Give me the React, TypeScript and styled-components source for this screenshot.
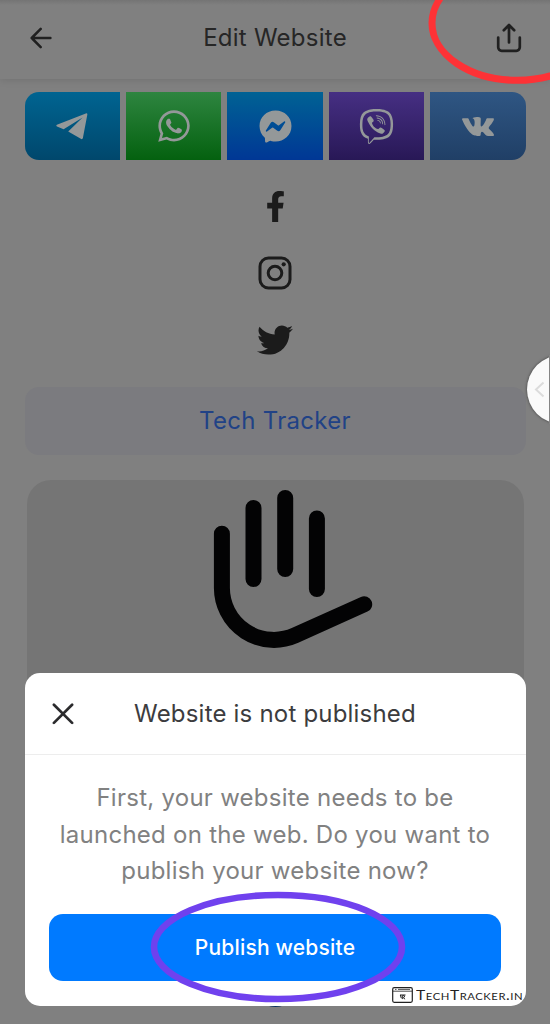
import React from "react";
import styled, { createGlobalStyle } from "styled-components";
import {
  FaWhatsapp,
  FaFacebookMessenger,
  FaViber,
  FaFacebookF,
  FaTwitter,
} from "react-icons/fa";

const GlobalStyle = createGlobalStyle`
  * { box-sizing: border-box; }
  body {
    margin: 0;
    background: #808080;
    font-family: Inter, "Liberation Sans", sans-serif;
    overflow: hidden;
  }
  svg { display: block; }
`;

const Screen = styled.main`
  position: relative;
  width: 550px;
  height: 1024px;
  overflow: hidden;
  background: #808080;
`;

const Header = styled.header`
  display: grid;
  grid-template-columns: 82px 1fr 82px;
  align-items: center;
  justify-items: center;
  height: 79px;
  padding-bottom: 3px;
  background: linear-gradient(#747474 0, #808080 5px);
  box-shadow: 0 1px 8px rgba(0, 0, 0, 0.12);
`;

const Title = styled.h1`
  margin: 0 0 1px;
  font-size: 24px;
  font-weight: 400;
  letter-spacing: 0.25px;
  color: #262626;
`;

const Page = styled.div`
  display: flex;
  flex-direction: column;
  padding: 13px 24.5px 0;
`;

const Messengers = styled.nav`
  display: flex;
  gap: 6px;
  height: 68px;
  border-radius: 14px;
  overflow: hidden;
`;

const Messenger = styled.a<{ $from: string; $to: string }>`
  flex: 1;
  display: flex;
  align-items: center;
  justify-content: center;
  color: #949899;
  background: linear-gradient(${(p) => p.$from}, ${(p) => p.$to});
`;

const Socials = styled.div`
  display: flex;
  flex-direction: column;
  align-items: center;
  padding-top: 12.5px;
  margin-bottom: 13px;
  color: #1b1b1b;
`;

const Social = styled.a`
  display: flex;
  align-items: center;
  justify-content: center;
  height: 67px;
`;

const LinkButton = styled.a`
  display: flex;
  align-items: center;
  justify-content: center;
  height: 68px;
  padding-bottom: 1px;
  border-radius: 14px;
  background: #7b7b7f;
  color: #214286;
  font-size: 24px;
  letter-spacing: 0.3px;
`;

const Card = styled.section`
  height: 500px;
  margin: 25px 2px 0;
  border-radius: 24px;
  background: #757575;
`;

const Sheet = styled.section`
  position: absolute;
  left: 24.5px;
  right: 24.5px;
  bottom: 18.5px;
  height: 332.5px;
  border-radius: 15px;
  background: #fff;
`;

const SheetHeader = styled.div`
  display: grid;
  grid-template-columns: 76px 1fr 76px;
  align-items: center;
  justify-items: center;
  height: 82px;
  border-bottom: 1px solid #ededed;
`;

const SheetTitle = styled.h2`
  margin: 0;
  font-size: 24px;
  font-weight: 400;
  letter-spacing: 0.2px;
  white-space: nowrap;
  color: #3c3c3e;
`;

const Message = styled.p`
  margin: 25px 0 24px;
  text-align: center;
  font-size: 24px;
  line-height: 36.6px;
  letter-spacing: 0.26px;
  color: #818181;
`;

const Publish = styled.button`
  display: block;
  width: 452px;
  height: 67px;
  margin: 0 auto;
  padding: 0;
  border: 0;
  border-radius: 14px;
  background: #007aff;
  color: #fff;
  font: 500 21px Inter, "Liberation Sans", sans-serif;
  letter-spacing: 0.2px;
`;

const BottomBadge = styled.div`
  position: absolute;
  left: 252px;
  top: 960px;
  width: 47px;
  height: 47px;
  border-radius: 50%;
  background: #08305f;
`;

const Handle = styled.div`
  position: absolute;
  left: 527px;
  top: 355px;
  width: 69px;
  height: 69px;
  padding: 26px 0 0 6px;
  border-radius: 50%;
  background: #fafafa;
  box-shadow: 0 0 3px rgba(0, 0, 0, 0.55);
`;

const ScreenEdge = styled.div`
  position: absolute;
  right: 0;
  top: 355px;
  width: 1px;
  height: 69px;
  background: #858585;
`;

const Marks = styled.svg`
  position: absolute;
  inset: 0;
  pointer-events: none;
`;

const Watermark = styled.div`
  position: absolute;
  left: 392px;
  top: 986px;
  display: flex;
  align-items: center;
  gap: 3px;
  color: #222;
`;

const WatermarkText = styled.span`
  font-family: Lato, "Open Sans", sans-serif;
  font-size: 12.5px;
  line-height: 17px;
  font-variant: small-caps;
  letter-spacing: 0.45px;
  white-space: nowrap;
  transform: scaleX(1.25);
  transform-origin: left;
  padding-top: 1px;
`;

const Telegram = () => (
  <svg width="32" height="27" viewBox="0 0 32 27" fill="currentColor">
    <path d="M.9 11.8L29.8.4Q31.6-.1 31.3 1.7L26.9 25Q26.4 26.8 24.8 25.8L12.2 18.6 26.6 4.4 7.6 16.2 1 13.6Q-.4 12.6.9 11.8z" />
  </svg>
);

const Vk = () => (
  <svg width="32" height="19" viewBox="0 5 24 14" preserveAspectRatio="none" fill="currentColor">
    <path d="M13.162 18.994c.609 0 .858-.406.851-.915-.031-1.917.714-2.949 2.059-1.604 1.488 1.488 1.796 2.519 3.603 2.519h3.2c.808 0 1.126-.26 1.126-.668 0-.863-1.421-2.386-2.625-3.504-1.686-1.565-1.765-1.602-.313-3.486 1.801-2.339 4.157-5.336 2.073-5.336h-3.981c-.772 0-.828.435-1.103 1.083-.995 2.347-2.886 5.387-3.604 4.922-.751-.485-.407-2.406-.35-5.261.015-.754.011-1.271-1.141-1.539-.629-.145-1.241-.205-1.809-.205-2.273 0-3.841.953-2.95 1.119 1.571.293 1.42 3.692 1.054 5.16-.638 2.556-3.036-2.024-4.035-4.305-.241-.548-.315-.974-1.175-.974h-3.255c-.492 0-.787.16-.787.516 0 .602 2.96 6.72 5.786 9.77 2.756 2.975 5.48 2.708 7.376 2.708z" />
  </svg>
);

const messengers = [
  { name: "Telegram", from: "#006491", to: "#00476c", icon: <Telegram /> },
  { name: "WhatsApp", from: "#2e8540", to: "#04610f", icon: <FaWhatsapp size={36} /> },
  { name: "Messenger", from: "#006294", to: "#003795", icon: <FaFacebookMessenger size={33} /> },
  { name: "Viber", from: "#462f83", to: "#281856", icon: <FaViber size={35} /> },
  { name: "VK", from: "#2f5683", to: "#203f66", icon: <Vk /> },
];

const Instagram = () => (
  <svg width="34" height="34" viewBox="0 0 34 34" fill="none" stroke="currentColor" strokeWidth="3">
    <rect x="2" y="2" width="30" height="30" rx="8.5" />
    <circle cx="17" cy="17" r="6.8" />
    <circle cx="25.7" cy="8.3" r="2.1" fill="currentColor" stroke="none" />
  </svg>
);

const Hand = () => (
  <svg width="497" height="190" viewBox="26.8 480 497 190" fill="none" stroke="#030304" strokeWidth="16" strokeLinecap="round" strokeLinejoin="round">
    <path d="M221.7 533.7V588A52 52 0 0 0 294.8 635.4L364 604.3" />
    <path d="M253.3 508V579M285 498V569M316.7 518.5V589" />
  </svg>
);

export default function App() {
  return (
    <Screen>
      <GlobalStyle />
      <Header>
        <svg width="22" height="22" viewBox="0 0 22 22" fill="none" stroke="#202020" strokeWidth="2.5" strokeLinecap="round" strokeLinejoin="round">
          <path d="M20.4 11H1.7M10.7 1.9L1.7 11l9 9.1" />
        </svg>
        <Title>Edit Website</Title>
        <svg width="26" height="30" viewBox="0 0 26 30" fill="none" stroke="#202020" strokeWidth="2.7" strokeLinecap="round" strokeLinejoin="round">
          <path d="M13 19.5V2M7.8 7.2L13 2l5.2 5.2M2.2 14.5v9.8a3.5 3.5 0 0 0 3.5 3.5h14.6a3.5 3.5 0 0 0 3.5-3.5v-9.8" />
        </svg>
      </Header>
      <Page>
        <Messengers>
          {messengers.map((m) => (
            <Messenger key={m.name} aria-label={m.name} $from={m.from} $to={m.to}>
              {m.icon}
            </Messenger>
          ))}
        </Messengers>
        <Socials>
          <Social aria-label="Facebook"><FaFacebookF size={31} /></Social>
          <Social aria-label="Instagram"><Instagram /></Social>
          <Social aria-label="Twitter"><FaTwitter size={36} /></Social>
        </Socials>
        <LinkButton>Tech Tracker</LinkButton>
        <Card><Hand /></Card>
      </Page>
      <BottomBadge />
      <Sheet>
        <SheetHeader>
          <svg width="22" height="22" viewBox="0 0 22 22" fill="none" stroke="#2b2b2d" strokeWidth="2.7" strokeLinecap="round">
            <path d="M1.9 1.7l18.2 18.2M20.1 1.7L1.9 19.9" />
          </svg>
          <SheetTitle>Website is not published</SheetTitle>
        </SheetHeader>
        <Message>
          First, your website needs to be<br />
          launched on the web. Do you want to<br />
          publish your website now?
        </Message>
        <Publish>Publish website</Publish>
      </Sheet>
      <Handle>
        <svg width="12" height="17" viewBox="0 0 12 17" fill="none" stroke="#dcdcdc" strokeWidth="2">
          <path d="M10.5 1.5L3 8.5l7.5 7" />
        </svg>
      </Handle>
      <ScreenEdge />
      <Marks width="550" height="1024" viewBox="0 0 550 1024" fill="none" strokeWidth="7">
        <ellipse cx="517" cy="23" rx="85" ry="57.3" stroke="#fd3236" />
        <ellipse cx="278" cy="947" rx="124" ry="52" stroke="#7041ee" strokeWidth="6.6" />
      </Marks>
      <Watermark>
        <svg width="21" height="16" viewBox="0 0 21 16" fill="none" stroke="#222" strokeWidth="1.2">
          <rect x="0.7" y="0.7" width="19.6" height="14.6" rx="1.5" />
          <path d="M1 4.2h19M3 2.4h1.5M6 2.4h12" strokeWidth="0.8" />
          <path d="M8 8h5.5M8.3 8l1 3.2M10.3 8.2v3.6l1.1-1 1.7 1.4M11 8.5l2 .8-1.6 1.4" strokeWidth="1" />
        </svg>
        <WatermarkText>TechTracker.in</WatermarkText>
      </Watermark>
    </Screen>
  );
}
